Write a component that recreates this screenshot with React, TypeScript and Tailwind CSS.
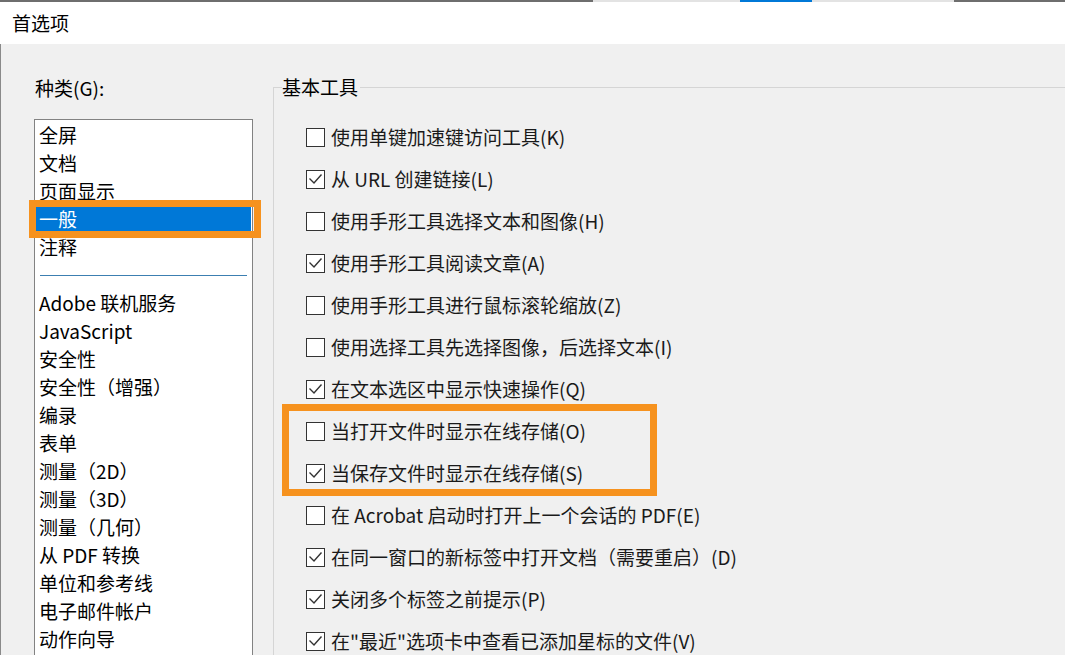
import React from "react";

const categoriesTop = ["全屏", "文档", "页面显示", "一般", "注释"];
const categoriesBottom = [
  "Adobe 联机服务",
  "JavaScript",
  "安全性",
  "安全性（增强）",
  "编录",
  "表单",
  "测量（2D）",
  "测量（3D）",
  "测量（几何）",
  "从 PDF 转换",
  "单位和参考线",
  "电子邮件帐户",
  "动作向导",
];

const options = [
  { label: "使用单键加速键访问工具(K)", checked: false },
  { label: "从 URL 创建链接(L)", checked: true },
  { label: "使用手形工具选择文本和图像(H)", checked: false },
  { label: "使用手形工具阅读文章(A)", checked: true },
  { label: "使用手形工具进行鼠标滚轮缩放(Z)", checked: false },
  { label: "使用选择工具先选择图像，后选择文本(I)", checked: false },
  { label: "在文本选区中显示快速操作(Q)", checked: true },
  { label: "当打开文件时显示在线存储(O)", checked: false },
  { label: "当保存文件时显示在线存储(S)", checked: true },
  { label: "在 Acrobat 启动时打开上一个会话的 PDF(E)", checked: false },
  { label: "在同一窗口的新标签中打开文档（需要重启）(D)", checked: true },
  { label: "关闭多个标签之前提示(P)", checked: true },
  { label: '在"最近"选项卡中查看已添加星标的文件(V)', checked: true },
];

const Checkbox = ({ checked }: { checked: boolean }) => (
  <div className="w-[19px] h-[19px] shrink-0 border border-[#333333] bg-white">
    {checked && (
      <svg viewBox="0 0 17 17" className="w-full h-full">
        <polyline
          points="2.5,7.5 7,12 14.5,3.5"
          fill="none"
          stroke="#333333"
          strokeWidth="1.4"
        />
      </svg>
    )}
  </div>
);

const OptionRow = ({ label, checked }: { label: string; checked: boolean }) => (
  <div className="h-[42px] flex items-center gap-[6px] whitespace-nowrap">
    <Checkbox checked={checked} />
    <span className="leading-[24px] text-[#1a1a1a]">{label}</span>
  </div>
);

export default function App() {
  return (
    <div className="w-[1065px] h-[655px] overflow-hidden bg-[#f0f0f0] flex flex-col font-['Noto_Sans_CJK_SC',sans-serif] text-[19px] text-black">
      {/* edge of the window behind */}
      <div className="h-[2px] flex shrink-0">
        <div className="w-[593px] bg-[#6e6e6e]" />
        <div className="w-[147px] bg-[#e3e3e3]" />
        <div className="w-[72px] bg-[#0078d7]" />
        <div className="w-[142px] bg-[#e3e3e3]" />
        <div className="flex-1 bg-[#6e6e6e]" />
      </div>

      <div className="h-[42px] shrink-0 bg-white flex items-center pl-[12px] leading-[24px]">
        首选项
      </div>

      <div className="flex flex-1 min-h-0 border-l border-[#8a8a8a]">
        {/* categories */}
        <div className="w-[272px] shrink-0 flex flex-col pl-[33px] pt-[32px]">
          <div className="pl-[1px] leading-[24px]">种类(G):</div>
          <div className="mt-[19px] w-[219px] flex-1 bg-white border border-b-0 border-[#828282] pt-[1px]">
            {categoriesTop.map((item) =>
              item === "一般" ? (
                <div
                  key={item}
                  className="relative h-[28px] leading-[28px] pl-[4px] mr-[1px] bg-[#0078d7] text-white"
                >
                  {item}
                  <div className="absolute -left-[6px] -top-[5px] w-[232px] h-[38px] border-[7px] border-[#f6921e]" />
                </div>
              ) : (
                <div key={item} className="h-[28px] leading-[28px] pl-[4px]">
                  {item}
                </div>
              )
            )}
            <div className="h-[28px] flex items-center px-[5px]">
              <div className="h-px flex-1 bg-[#3c7fb1]" />
            </div>
            {categoriesBottom.map((item) => (
              <div key={item} className="h-[28px] leading-[28px] pl-[4px] whitespace-nowrap">
                {item}
              </div>
            ))}
          </div>
        </div>

        {/* basic tools group */}
        <fieldset className="mt-[31px] w-[900px] shrink-0 border-l border-t border-[#d5d5d5]">
          <legend className="ml-[8px] pr-[2px] leading-[24px]">基本工具</legend>
          <div className="flex flex-col pl-[32px] pt-[17px]">
            {options.slice(0, 7).map((o) => (
              <OptionRow key={o.label} label={o.label} checked={o.checked} />
            ))}
            <div className="relative">
              {options.slice(7, 9).map((o) => (
                <OptionRow key={o.label} label={o.label} checked={o.checked} />
              ))}
              <div className="absolute -left-[24px] -top-[6px] w-[375px] h-[92px] border-[7px] border-[#f6921e]" />
            </div>
            {options.slice(9).map((o) => (
              <OptionRow key={o.label} label={o.label} checked={o.checked} />
            ))}
          </div>
        </fieldset>
      </div>
    </div>
  );
}
